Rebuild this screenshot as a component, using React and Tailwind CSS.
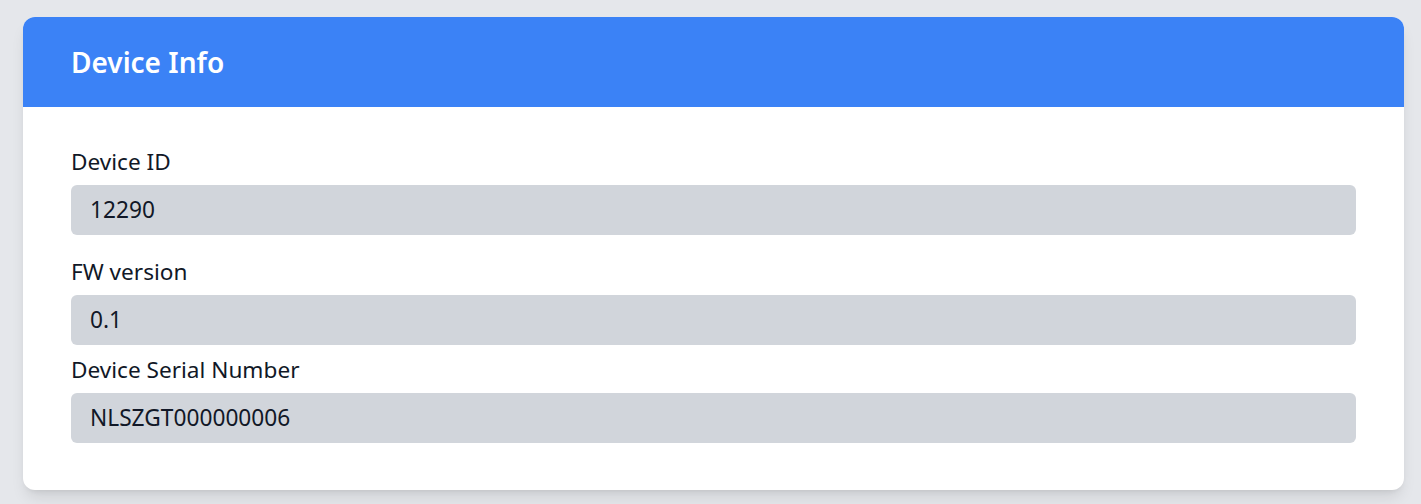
import React from 'react';

const fields = [
  { label: 'Device ID', value: '12290', gap: 'mb-6' },
  { label: 'FW version', value: '0.1', gap: 'mb-3' },
  { label: 'Device Serial Number', value: 'NLSZGT000000006', gap: '' },
];

const Field = ({ label, value, gap }) => (
  <div className={gap}>
    <label className="block text-[22.6px] leading-[26px] text-[#111827] mb-[10px]">{label}</label>
    <div className="h-[50px] rounded-md bg-[#d1d5db] px-[19px] flex items-center text-[22.7px] text-[#111827]">
      {value}
    </div>
  </div>
);

export default function App() {
  return (
    <div
      className="min-h-screen bg-[#e5e7eb] pl-[23px] pr-[17px] pt-[17px] pb-4"
      style={{ fontFamily: '"Noto Sans", "Open Sans", sans-serif' }}
    >
      <div className="bg-white rounded-xl shadow-lg overflow-hidden">
        <div className="bg-[#3b82f6] h-[90px] px-12 flex items-center">
          <h1 className="text-white text-[28px] font-semibold">Device Info</h1>
        </div>
        <div className="px-12 pt-[42px] pb-[47px]">
          {fields.map((f) => (
            <Field key={f.label} {...f} />
          ))}
        </div>
      </div>
    </div>
  );
}
